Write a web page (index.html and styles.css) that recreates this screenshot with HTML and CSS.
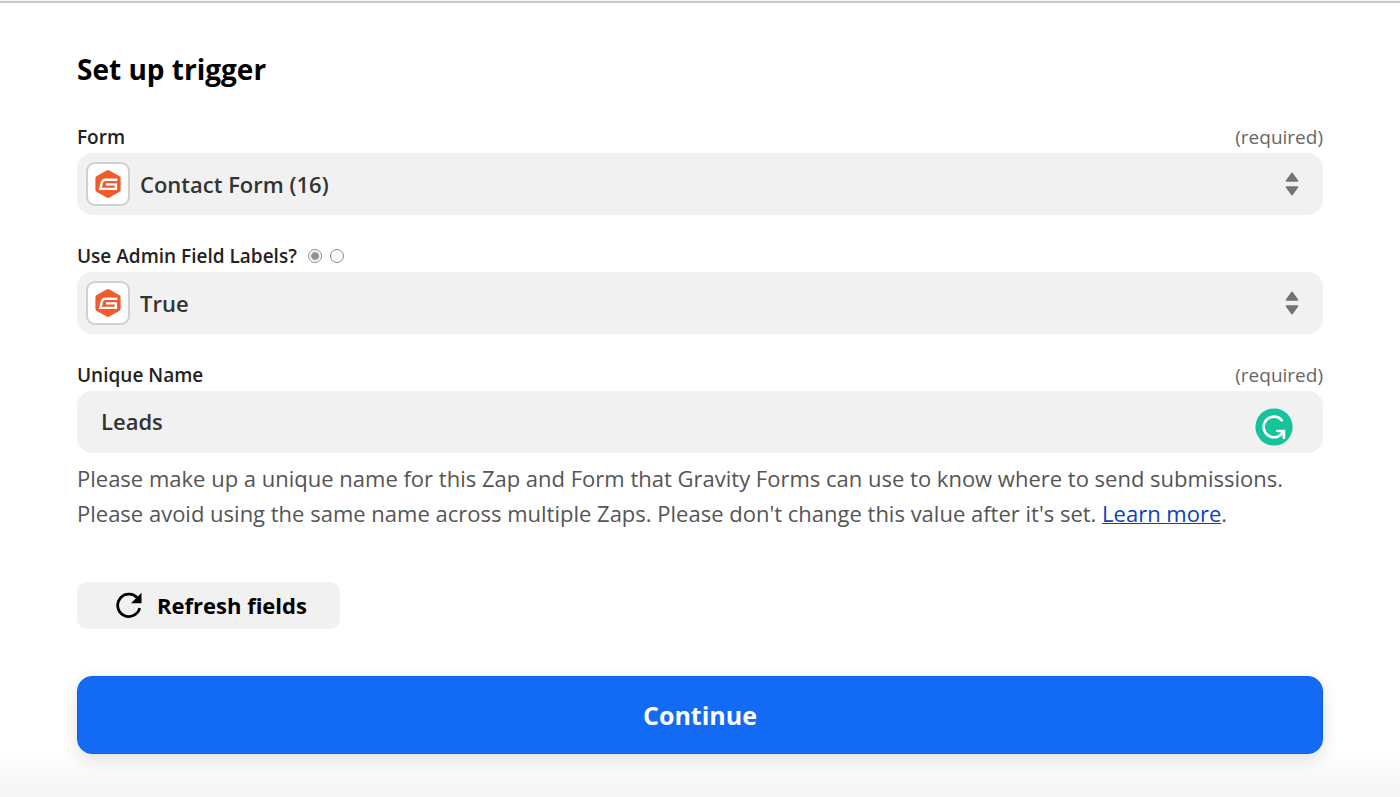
FILE: index.html
```html
<!DOCTYPE html>
<html lang="en">
<head>
<meta charset="utf-8">
<meta name="viewport" content="width=device-width, initial-scale=1">
<title>Set up trigger</title>
<link rel="stylesheet" href="styles.css">
</head>
<body>
<svg class="defs" aria-hidden="true">
  <symbol id="gravity" viewBox="0 0 26 28">
    <path d="M11.6 .6Q13 -.2 14.4 .6L24.2 6Q25.6 6.8 25.6 8.4V19.6Q25.6 21.2 24.2 22L14.4 27.4Q13 28.2 11.6 27.4L1.8 22Q.4 21.2 .4 19.6V8.4Q.4 6.8 1.8 6Z" fill="#f15a2b"/>
    <path d="M22.300 9.700H10.500Q7.800 9.700 6.900 12.400L5.300 18.900H20.900V14.400H11" fill="none" stroke="#fff" stroke-width="2.400"/>
  </symbol>
  <symbol id="sort" viewBox="0 0 14 24">
    <path d="M7 1.200L12.600 9H1.400ZM7 22.800L12.600 15H1.400Z" fill="#737373" stroke="#737373" stroke-width="1.400" stroke-linejoin="round"/>
  </symbol>
</svg>
<main class="panel">
  <h1 class="title">Set up trigger</h1>
  <form class="form">
    <div class="field">
      <div class="label-row"><label class="label" for="form">Form</label><span class="required">(required)</span></div>
      <div class="control">
        <select class="box select" id="form"><option>Contact Form (16)</option></select>
        <span class="app"><svg class="app-icon"><use href="#gravity"/></svg></span>
        <svg class="sort"><use href="#sort"/></svg>
      </div>
    </div>
    <div class="field">
      <div class="label-row">
        <label class="label" for="admin">Use Admin Field Labels?</label>
        <span class="radios">
          <input class="radio" type="radio" name="mode" aria-label="Choose value" checked>
          <input class="radio" type="radio" name="mode" aria-label="Custom value">
        </span>
      </div>
      <div class="control">
        <select class="box select" id="admin"><option>True</option></select>
        <span class="app"><svg class="app-icon"><use href="#gravity"/></svg></span>
        <svg class="sort"><use href="#sort"/></svg>
      </div>
    </div>
    <div class="field">
      <div class="label-row"><label class="label" for="name">Unique Name</label><span class="required">(required)</span></div>
      <div class="control">
        <input class="box text" id="name" type="text" value="Leads">
        <svg class="checker" viewBox="0 0 38 38" aria-hidden="true">
          <circle cx="19" cy="19" r="18.600" fill="#15c39a"/>
          <path d="M26.800 12.300A10.300 10.300 0 1 0 19 29.300C22.800 29.300 26 27.500 28 23.600" fill="none" stroke="#fff" stroke-width="2.700" stroke-linecap="round"/>
          <path d="M22.300 23H28.900V29.800" fill="none" stroke="#fff" stroke-width="2.700" stroke-linecap="round"/>
        </svg>
      </div>
      <p class="help">Please make up a unique name for this Zap and Form that Gravity Forms can use to know where to send submissions. Please avoid using the same name across multiple Zaps. Please don't change this value after it's set. <a class="link" href="#learn">Learn more</a>.</p>
    </div>
    <button class="refresh" type="button">
      <svg class="refresh-icon" viewBox="0 0 26 26" aria-hidden="true">
        <path d="M21.800 6.500A11.200 11.200 0 1 0 23.700 16.200" fill="none" stroke="#000" stroke-width="2.800"/>
        <path d="M25.500 .8V11.300H15Z"/>
      </svg>
      Refresh fields
    </button>
    <button class="continue" type="submit">Continue</button>
  </form>
</main>
</body>
</html>
```
FILE: styles.css
```css
* {
  box-sizing: border-box;
}

body {
  margin: 0;
  min-height: 100vh;
  border-top: 1px solid #f4f4f4;
  background: linear-gradient(to top, #f5f5f5, #fff 48px);
  font-family: "Open Sans", "Noto Sans", sans-serif;
  color: #000;
}

.defs {
  position: absolute;
  width: 0;
  height: 0;
}

.panel {
  border-top: 2px solid #c8c8c8;
  padding: 46px 77px 43px;
}

.title {
  margin: 0 0 35px;
  font-size: 28px;
  line-height: 40px;
  font-weight: 700;
}

.form,
.field {
  display: flex;
  flex-direction: column;
}

.field {
  margin-bottom: 28px;
}

.label-row {
  display: flex;
  align-items: center;
  height: 26px;
  margin-bottom: 3px;
  font-size: 19px;
  line-height: 26px;
}

.label {
  font-weight: 600;
  color: #222;
}

.required {
  margin-left: auto;
  color: #666;
}

.radios {
  display: flex;
  gap: 8px;
  margin-left: 11px;
}

.radio {
  appearance: none;
  width: 14px;
  height: 14px;
  margin: 0;
  border: 1px solid #8c8c8c;
  border-radius: 50%;
  background: #fff;
}

.radio:checked {
  background: radial-gradient(circle, #909090 3px, #fff 5px);
}

.control {
  position: relative;
}

.box {
  display: block;
  appearance: none;
  width: 100%;
  height: 62px;
  border: 0;
  border-radius: 15px;
  background: #f1f1f1;
  font: 600 22px/32px "Open Sans", "Noto Sans", sans-serif;
  color: #333;
}

.select {
  padding: 0 63px;
}

.text {
  padding: 0 72px 2px 24px;
}

.app {
  position: absolute;
  top: 9px;
  left: 9px;
  display: flex;
  align-items: center;
  justify-content: center;
  width: 44px;
  height: 44px;
  border: 2px solid #d0d0d0;
  border-radius: 9px;
  background: #fff;
  pointer-events: none;
}

.app-icon {
  width: 26px;
  height: 28px;
}

.sort {
  position: absolute;
  top: 19px;
  right: 24px;
  width: 14px;
  height: 24px;
  pointer-events: none;
}

.checker {
  position: absolute;
  top: 17px;
  right: 30px;
  width: 38px;
  height: 38px;
}

.help {
  margin: 8px 0 23px;
  font-size: 22px;
  line-height: 35px;
  color: #555;
}

.link {
  color: #0b3fc1;
  text-decoration-thickness: 1px;
}

.refresh {
  display: flex;
  align-self: flex-start;
  align-items: center;
  gap: 15px;
  height: 47px;
  margin-bottom: 47px;
  padding: 0 33px 2px 39px;
  border: 0;
  border-radius: 10px;
  background: #f1f1f1;
  font: 700 22px/32px "Open Sans", "Noto Sans", sans-serif;
  color: #000;
}

.refresh-icon {
  width: 26px;
  height: 26px;
}

.continue {
  height: 78px;
  border: 1px solid #0a60ef;
  border-radius: 15px;
  background: #136bf5;
  box-shadow: 0 6px 18px rgba(0, 0, 0, .12);
  font: 700 25px/34px "Open Sans", "Noto Sans", sans-serif;
  color: #fff;
}
```
